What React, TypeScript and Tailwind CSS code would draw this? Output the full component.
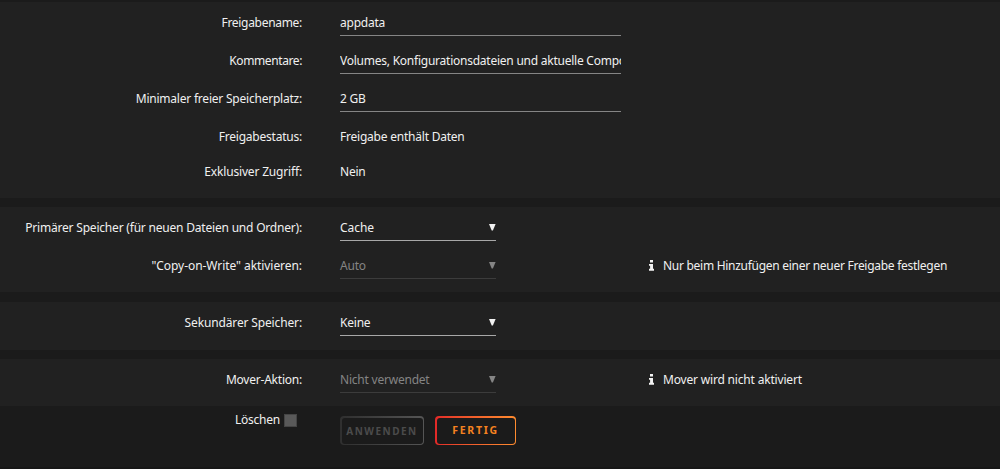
import React from 'react';
import clsx from 'clsx';

interface RowProps {
  label: string;
  labelClass?: string;
  className?: string;
  hint?: string;
  hintClass?: string;
  children: React.ReactNode;
}

const InfoIcon: React.FC = () => (
  <svg className="mr-[9px] mt-[-1px] h-[11px] w-[5px] shrink-0" viewBox="0 0 5 11" fill="#f2f2f2">
    <path d="M1 0h3v2.5H1zM0 4h4v4.8h1v1.9H0V8.8h1.1V5.8H0z" />
  </svg>
);

const Row: React.FC<RowProps> = ({ label, labelClass, className, hint, hintClass, children }) => (
  <div className={clsx('flex items-start', className || 'h-[38px]')}>
    <div className="mr-[38px] w-[302px] shrink-0 text-right leading-[20px]">
      <span className={labelClass}>{label}</span>
    </div>
    <div className="w-[309px] shrink-0">{children}</div>
    {hint && (
      <div className="flex h-[20px] items-center leading-[20px]">
        <InfoIcon />
        <span className={hintClass}>{hint}</span>
      </div>
    )}
  </div>
);

const TextInput: React.FC<{ value: string }> = ({ value }) => (
  <input
    type="text"
    defaultValue={value}
    className="block h-[23px] w-[281px] border-b border-[#858585] bg-transparent pb-[3px] leading-[18px] tracking-[-0.24px] outline-none"
  />
);

const Select: React.FC<{ value: string; disabled?: boolean; className?: string }> = ({ value, disabled, className }) => (
  <button
    type="button"
    disabled={disabled}
    className={clsx(
      'flex h-[23px] w-[156px] items-start justify-between border-b leading-[19px]',
      disabled ? 'border-[#3c3c3c] text-[#848484]' : 'border-[#a8a8a8]'
    )}
  >
    <span className={className}>{value}</span>
    <svg className="mt-[6px] h-[7px] w-[7px]" viewBox="0 0 7 7" fill={disabled ? '#858585' : '#f2f2f2'}>
      <path d="M0 0h6.6L3.9 6.5H2.7z" />
    </svg>
  </button>
);

const App: React.FC = () => {
  return (
    <div className="h-[469px] w-[1000px] overflow-hidden bg-[#1b1b1b] pt-[2px] font-['Noto_Sans','Open_Sans',sans-serif] text-[12px] tracking-[-0.22px] text-[#f0f0f0]">
      {/* Share settings */}
      <section className="h-[196px] bg-[#212121] pt-[11px]">
        <Row label="Freigabename:" labelClass="tracking-[-0.3px]">
          <TextInput value="appdata" />
        </Row>
        <Row label="Kommentare:" labelClass="tracking-[-0.4px]">
          <TextInput value="Volumes, Konfigurationsdateien und aktuelle Compose-Dateien" />
        </Row>
        <Row label="Minimaler freier Speicherplatz:">
          <TextInput value="2 GB" />
        </Row>
        <Row label="Freigabestatus:" className="h-[35px]">
          <span className="block leading-[20px]">Freigabe enthält Daten</span>
        </Row>
        <Row label="Exklusiver Zugriff:" labelClass="tracking-[-0.17px]">
          <span className="block leading-[20px]">Nein</span>
        </Row>
      </section>

      {/* Primary storage */}
      <section className="mt-[9px] h-[85px] bg-[#212121] pt-[11px]">
        <Row label="Primärer Speicher (für neuen Dateien und Ordner):" labelClass="tracking-[-0.2px]">
          <Select value="Cache" className="tracking-[-0.05px]" />
        </Row>
        <Row
          label={'"Copy-on-Write" aktivieren:'}
          labelClass="tracking-[-0.06px]"
          hint="Nur beim Hinzufügen einer neuer Freigabe festlegen"
          hintClass="tracking-[-0.28px]"
        >
          <Select value="Auto" disabled />
        </Row>
      </section>

      {/* Secondary storage */}
      <section className="mt-[10px] h-[48px] bg-[#212121] pt-[11px]">
        <Row label="Sekundärer Speicher:" labelClass="tracking-[-0.14px]">
          <Select value="Keine" />
        </Row>
      </section>

      {/* Mover */}
      <section className="mt-[9px] h-[47px] bg-[#212121] pt-[11px]">
        <Row label="Mover-Aktion:" hint="Mover wird nicht aktiviert" hintClass="tracking-[-0.18px]">
          <Select value="Nicht verwendet" disabled />
        </Row>
      </section>

      {/* Actions */}
      <div className="flex h-[61px] items-start">
        <label className="mr-[43px] flex w-[297px] items-center justify-end pt-[5px] leading-[18px]">
          Löschen
          <input
            type="checkbox"
            className="ml-[4px] h-[13px] w-[13px] appearance-none border border-[#454545] bg-[#595959]"
          />
        </label>
        <button
          type="button"
          disabled
          className="mt-[10px] h-[29px] w-[84px] rounded-[4px] bg-linear-to-r from-[#2f2f2f] to-[#555555] p-[1.5px]"
        >
          <span className="flex h-full items-center justify-center rounded-[3px] bg-[#1b1b1b] pt-[1px] text-[10px] font-bold tracking-[1.5px] text-[#4b4b4b]">
            ANWENDEN
          </span>
        </button>
        <button
          type="button"
          className="ml-[11px] mt-[10px] h-[29px] w-[81px] rounded-[4px] bg-linear-to-r from-[#e22828] to-[#ff8c2f] p-[1.5px]"
        >
          <span className="flex h-full items-center justify-center rounded-[3px] bg-[#1b1b1b] pt-[1px] text-[10.5px] font-bold tracking-[1.7px] text-[#f58220]">
            FERTIG
          </span>
        </button>
      </div>
      <div className="h-[2px] bg-[#171717]" />
    </div>
  );
};

export default App;
